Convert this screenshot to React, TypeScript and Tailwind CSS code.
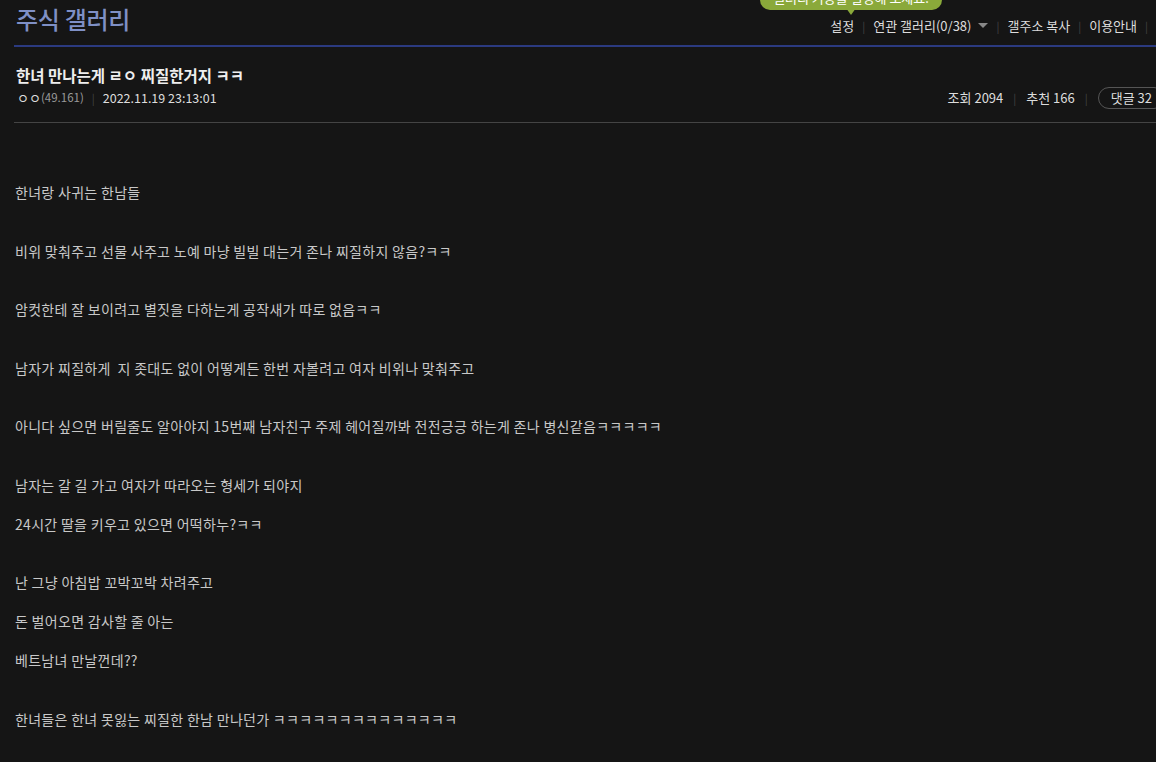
import React from "react";

const KR = { fontFamily: "'Noto Sans CJK KR', 'Noto Sans', sans-serif" };

// 본문: 빈 줄 수는 원본 간격 기준
const BODY: { text: string; gap: number }[] = [
  { text: "한녀랑 사귀는 한남들", gap: 2 },
  { text: "비위 맞춰주고 선물 사주고 노예 마냥 빌빌 대는거 존나 찌질하지 않음?ㅋㅋ", gap: 2 },
  { text: "암컷한테 잘 보이려고 별짓을 다하는게 공작새가 따로 없음ㅋㅋ", gap: 2 },
  { text: "남자가 찌질하게  지 좃대도 없이 어떻게든 한번 자볼려고 여자 비위나 맞춰주고", gap: 2 },
  { text: "아니다 싶으면 버릴줄도 알아야지 15번째 남자친구 주제 헤어질까봐 전전긍긍 하는게 존나 병신같음ㅋㅋㅋㅋㅋ", gap: 2 },
  { text: "남자는 갈 길 가고 여자가 따라오는 형세가 되야지", gap: 1 },
  { text: "24시간 딸을 키우고 있으면 어떡하누?ㅋㅋ", gap: 2 },
  { text: "난 그냥 아침밥 꼬박꼬박 차려주고", gap: 1 },
  { text: "돈 벌어오면 감사할 줄 아는", gap: 1 },
  { text: "베트남녀 만날껀데??", gap: 2 },
  { text: "한녀들은 한녀 못잃는 찌질한 한남 만나던가 ㅋㅋㅋㅋㅋㅋㅋㅋㅋㅋㅋㅋㅋㅋ", gap: 0 },
];

function Sep({ wide }: { wide?: boolean }) {
  return <span className={wide ? "mx-[10px] text-[#444] text-[11px]" : "mx-[8px] text-[#444] text-[11px]"}>|</span>;
}

export default function App() {
  return (
    <div className="h-[762px] w-[1156px] overflow-hidden bg-[#151515]" style={KR}>
      <div className="w-[1180px] pl-[14px]">
        {/* header */}
        <div className="relative flex h-[45px] items-start justify-between">
          <h2 className="pl-[2px] pt-[1px] text-[24px] font-medium leading-[36px] tracking-[-0.3px] text-[#7f90c6]">
            주식 갤러리
          </h2>
          <div className="absolute left-[746px] top-[-14px] rounded-[10px] bg-[#8aa93a] px-[13px] text-[13px] leading-[24px] text-white">
            갤러리 기능을 설정해 보세요.
            <span className="absolute left-[86px] top-[22px] h-0 w-0 border-x-[5px] border-t-[7px] border-x-transparent border-t-[#8aa93a]" />
          </div>
          <div className="mr-[24px] mt-[16px] flex items-center text-[13px] text-[#ddd]">
            <span>설정</span>
            <Sep />
            <span>연관 갤러리(0/38)</span>
            <span className="ml-[7px] h-0 w-0 border-x-[5px] border-t-[5px] border-x-transparent border-t-[#888]" />
            <Sep />
            <span>갤주소 복사</span>
            <Sep />
            <span>이용안내</span>
            <Sep />
          </div>
        </div>
        <div className="h-[2px] bg-[#2b3a80]" />

        {/* post head */}
        <div className="border-b border-[#444] pb-[13px]">
          <h3 className="pl-[2px] pt-[17px] text-[15.5px] font-bold leading-[22px] text-[#eee]">
            한녀 만나는게 ㄹㅇ 찌질한거지 ㅋㅋ
          </h3>
          <div className="mt-[1px] flex items-center justify-between pl-[3px]">
            <div className="flex items-center text-[13px] text-[#ddd]">
              <span>ㅇㅇ</span>
              <span className="text-[11.5px] text-[#999]">(49.161)</span>
              <Sep />
              <span className="text-[12.5px]">2022.11.19 23:13:01</span>
            </div>
            <div className="mr-[15px] flex items-center text-[13px] text-[#ddd]">
              <span>조회 2094</span>
              <Sep wide />
              <span>추천 166</span>
              <Sep wide />
              <span className="rounded-full border border-[#555] px-[12px] leading-[20px]">댓글 32</span>
            </div>
          </div>
        </div>

        {/* body */}
        <div className="pl-[1px] pt-[60px] text-[14px] leading-[19.5px] tracking-[0.3px] text-[#c8c8c8]">
          {BODY.map((p, i) => (
            <div key={i}>
              <p className="whitespace-pre">{p.text}</p>
              {Array.from({ length: p.gap }).map((_, j) => (
                <p key={j}>&nbsp;</p>
              ))}
            </div>
          ))}
        </div>
      </div>
    </div>
  );
}
